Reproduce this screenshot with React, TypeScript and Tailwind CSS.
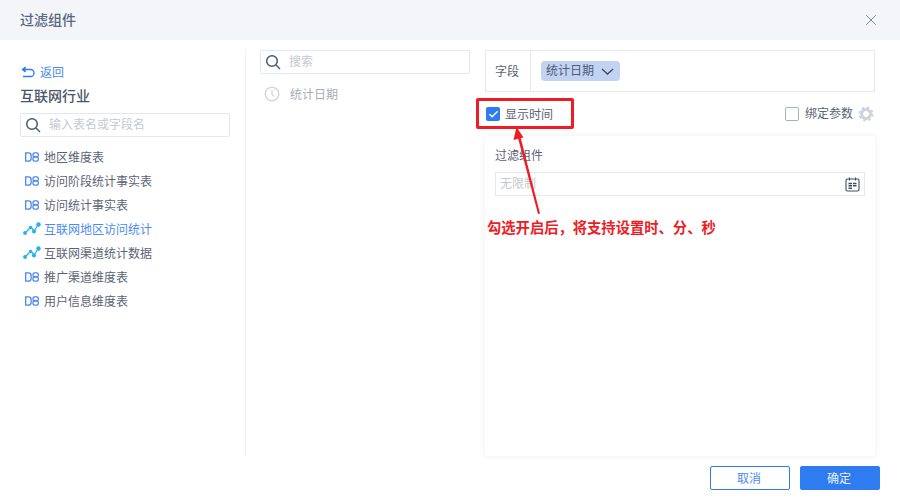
import React from "react";
import { X, Check } from "lucide-react";

const font = { fontFamily: '"Noto Sans CJK SC", "Liberation Sans", sans-serif' };

function DbIcon() {
  return (
    <svg width="14" height="10" viewBox="0 0 14 10" fill="none" stroke="#4a86ee" strokeWidth="1.300">
      <path d="M0.700 0.800h2.800a2.600 2.600 0 0 1 2.600 2.600v3.200a2.600 2.600 0 0 1 -2.600 2.600H0.700z" />
      <rect x="8" y="0.800" width="5.300" height="4" rx="1.600" />
      <rect x="8" y="4.800" width="5.300" height="4.400" rx="1.600" />
    </svg>
  );
}

function LineIcon() {
  return (
    <svg width="18" height="14" viewBox="0 0 18 14" fill="#22b0ee" stroke="#22b0ee" strokeWidth="1.300">
      <path d="M2 11 L8 5 L11 9 L15.500 2.500" fill="none" />
      <circle cx="2" cy="11" r="1.900" stroke="none" />
      <circle cx="7.500" cy="5.500" r="1.700" stroke="none" />
      <circle cx="11" cy="9.500" r="2" stroke="none" />
      <circle cx="15.500" cy="2.500" r="2.200" stroke="none" />
    </svg>
  );
}

function SearchGlyph() {
  return (
    <svg width="16" height="16" viewBox="0 0 16 16" fill="none" stroke="#4a5872" strokeWidth="1.500" className="ml-[4px] shrink-0">
      <circle cx="7" cy="7" r="5.300" />
      <path d="M11 11l4 4" />
    </svg>
  );
}

const tables = [
  { name: "地区维度表", line: false },
  { name: "访问阶段统计事实表", line: false },
  { name: "访问统计事实表", line: false },
  { name: "互联网地区访问统计", line: true, active: true },
  { name: "互联网渠道统计数据", line: true },
  { name: "推广渠道维度表", line: false },
  { name: "用户信息维度表", line: false },
];

function SearchBox({ placeholder, className }: { placeholder: string; className: string }) {
  return (
    <div className={`flex items-center border border-[#e4e7ed] rounded-[2px] ${className}`}>
      <SearchGlyph />
      <span className="text-[12px] leading-[18px] -mt-[2px] text-[#c5c9d1] ml-[8px]">{placeholder}</span>
    </div>
  );
}

export default function App() {
  return (
    <div className="relative w-[900px] h-[499px] bg-white overflow-hidden flex flex-col" style={font}>
      <header className="h-[40px] bg-[#f3f5f9] flex items-center justify-between pl-[20px] pr-[22px] shrink-0">
        <span className="text-[14px] leading-[20px] -mt-[2px] text-[#5a6780] font-medium">过滤组件</span>
        <X size={18} strokeWidth={1.200} className="text-[#6f7d96] -mr-[2px]" />
      </header>

      <main className="flex h-[416px] pt-[10px] shrink-0">
        <aside className="w-[246px] border-r border-[#f0f1f4] pl-[20px] pr-[15px] shrink-0">
          <div className="flex items-center gap-[5px] h-[20px] mt-[12px]">
            <svg width="14" height="12" viewBox="0 0 14 12" fill="none" stroke="#2f7bf0" strokeWidth="1.300" className="ml-px">
              <path d="M4.500 1 L1.500 3.500 L4.500 6" fill="#2f7bf0" />
              <path d="M1.500 3.500 H9.500 A3.300 3.300 0 0 1 9.500 10.500 H2" />
            </svg>
            <span className="text-[12px] leading-none text-[#4a8af2]">返回</span>
          </div>
          <div className="text-[14px] leading-[20px] mt-[3px] text-[#4a5568] font-medium">互联网行业</div>
          <SearchBox placeholder="输入表名或字段名" className="w-[210px] h-[24px] mt-[8px]" />
          <ul className="mt-[8px]">
            {tables.map((t) => (
              <li key={t.name} className="h-[24px] flex items-center">
                <span className={`w-[24px] flex items-center shrink-0 ${t.line ? "pl-[3px]" : "pl-[5px]"}`}>
                  {t.line ? <LineIcon /> : <DbIcon />}
                </span>
                <span className={`text-[12px] leading-[18px] -mt-px ${t.active ? "text-[#4a8af2]" : "text-[#5b6375]"}`}>{t.name}</span>
              </li>
            ))}
          </ul>
        </aside>

        <section className="w-[239px] pl-[14px] pr-[15px] shrink-0">
          <SearchBox placeholder="搜索" className="w-[210px] h-[24px]" />
          <div className="flex items-center h-[24px] mt-[8px] pl-[4px]">
            <svg width="16" height="16" viewBox="0 0 16 16" fill="none" stroke="#d3d7df" strokeWidth="1.400">
              <circle cx="8" cy="8" r="6.800" />
              <path d="M8 4v4.500l2 2" />
            </svg>
            <span className="text-[12px] leading-[18px] -mt-px text-[#a8adb8] ml-[10px]">统计日期</span>
          </div>
        </section>

        <section className="w-[390px] shrink-0 flex flex-col">
          <div className="h-[42px] border border-[#e6e8ee] flex items-center shrink-0">
            <span className="w-[45px] h-full border-r border-[#e6e8ee] flex items-center pl-[9px] pb-px text-[12px] text-[#5b6375] shrink-0">字段</span>
            <span className="ml-[10px] h-[20px] w-[79px] bg-[#c1d2f3] rounded-[4px] flex items-center pl-[5px] text-[12px] text-[#4f5b73]">
              <span className="-mt-[2px]">统计日期</span>
              <svg width="13" height="7" viewBox="0 0 13 7" fill="none" stroke="#3d4a63" strokeWidth="1.300" className="ml-[7px]">
                <path d="M1 1l5.500 5L12 1" />
              </svg>
            </span>
          </div>
          <div className="h-[44px] flex items-center justify-between shrink-0">
            <div className="flex items-center">
              <span className="w-[14px] h-[14px] ml-px rounded-[2px] bg-[#2f7bf0] flex items-center justify-center">
                <Check size={11} strokeWidth={3} className="text-white" />
              </span>
              <span className="text-[12px] leading-[18px] -mt-px text-[#5b6375] ml-[5px]">显示时间</span>
            </div>
            <div className="flex items-center">
              <span className="w-[14px] h-[14px] rounded-[2px] border border-[#a9b0bd]" />
              <span className="text-[12px] leading-[18px] -mt-[2px] text-[#5b6375] ml-[6px]">绑定参数</span>
              <svg width="16" height="16" viewBox="0 0 16 16" fill="none" stroke="#ced2d9" className="ml-[5px] mr-px">
                <circle cx="8" cy="8" r="4.400" strokeWidth="3" />
                <circle cx="8" cy="8" r="6.500" strokeWidth="2" strokeDasharray="2.600 2.500" />
              </svg>
            </div>
          </div>
          <div className="h-[320px] shadow-[0_0_6px_rgba(40,50,80,0.08)] px-[10px] pt-[10px]">
            <div className="text-[12px] leading-[18px] text-[#5b6375]">过滤组件</div>
            <div className="mt-[8px] h-[24px] border border-[#e6e8ee] flex items-center justify-between pl-[4px] pr-[4px]">
              <span className="text-[12px] leading-[18px] -mt-[2px] text-[#c5c9d1]">无限制</span>
              <svg width="15" height="15" viewBox="0 0 15 15" fill="none" stroke="#3f4c66" strokeWidth="1.100">
                <rect x="1" y="2" width="13" height="12" rx="1.500" />
                <path d="M4.500 0.500v3M10.500 0.500v3" />
                <path d="M3.500 6.500h3.500M8 6.500h3.500M3.500 8.800h3.500M8 8.800h3.500M3.500 11.200h3.500" strokeWidth="1.400" />
              </svg>
            </div>
          </div>
        </section>
      </main>

      <footer className="flex justify-end gap-[10px] pr-[20px] pt-[10px]">
        <button className="w-[80px] h-[24px] border border-[#2f7bf0] rounded-[2px] text-[12px] text-[#4a8af2] bg-white">
          <span className="block -mt-px -ml-[2px]">取消</span>
        </button>
        <button className="w-[80px] h-[24px] rounded-[2px] text-[12px] text-[#e8f0fe] bg-[#2f7bf0]">
          <span className="block -mt-px -ml-[2px]">确定</span>
        </button>
      </footer>

      {/* Annotation overlay */}
      <div className="absolute left-[476px] top-[98px] w-[98px] h-[31px] border-[3px] border-[#ee1c25] rounded-[2px]" />
      <svg className="absolute left-[500px] top-[120px]" width="60" height="100" viewBox="0 0 60 100" fill="#ee1c25" stroke="none">
        <path d="M40 93.500 L20.500 17 L18 18 L38 94z" />
        <path d="M16.500 7 L13.500 20 L19 18.500 L23.500 17.500z" />
      </svg>
      <div className="absolute left-[487px] top-[217px] text-[14.300px] leading-[20px] font-bold text-[#ee1c25] whitespace-nowrap">
        勾选开启后，将支持设置时、分、秒
      </div>
    </div>
  );
}
